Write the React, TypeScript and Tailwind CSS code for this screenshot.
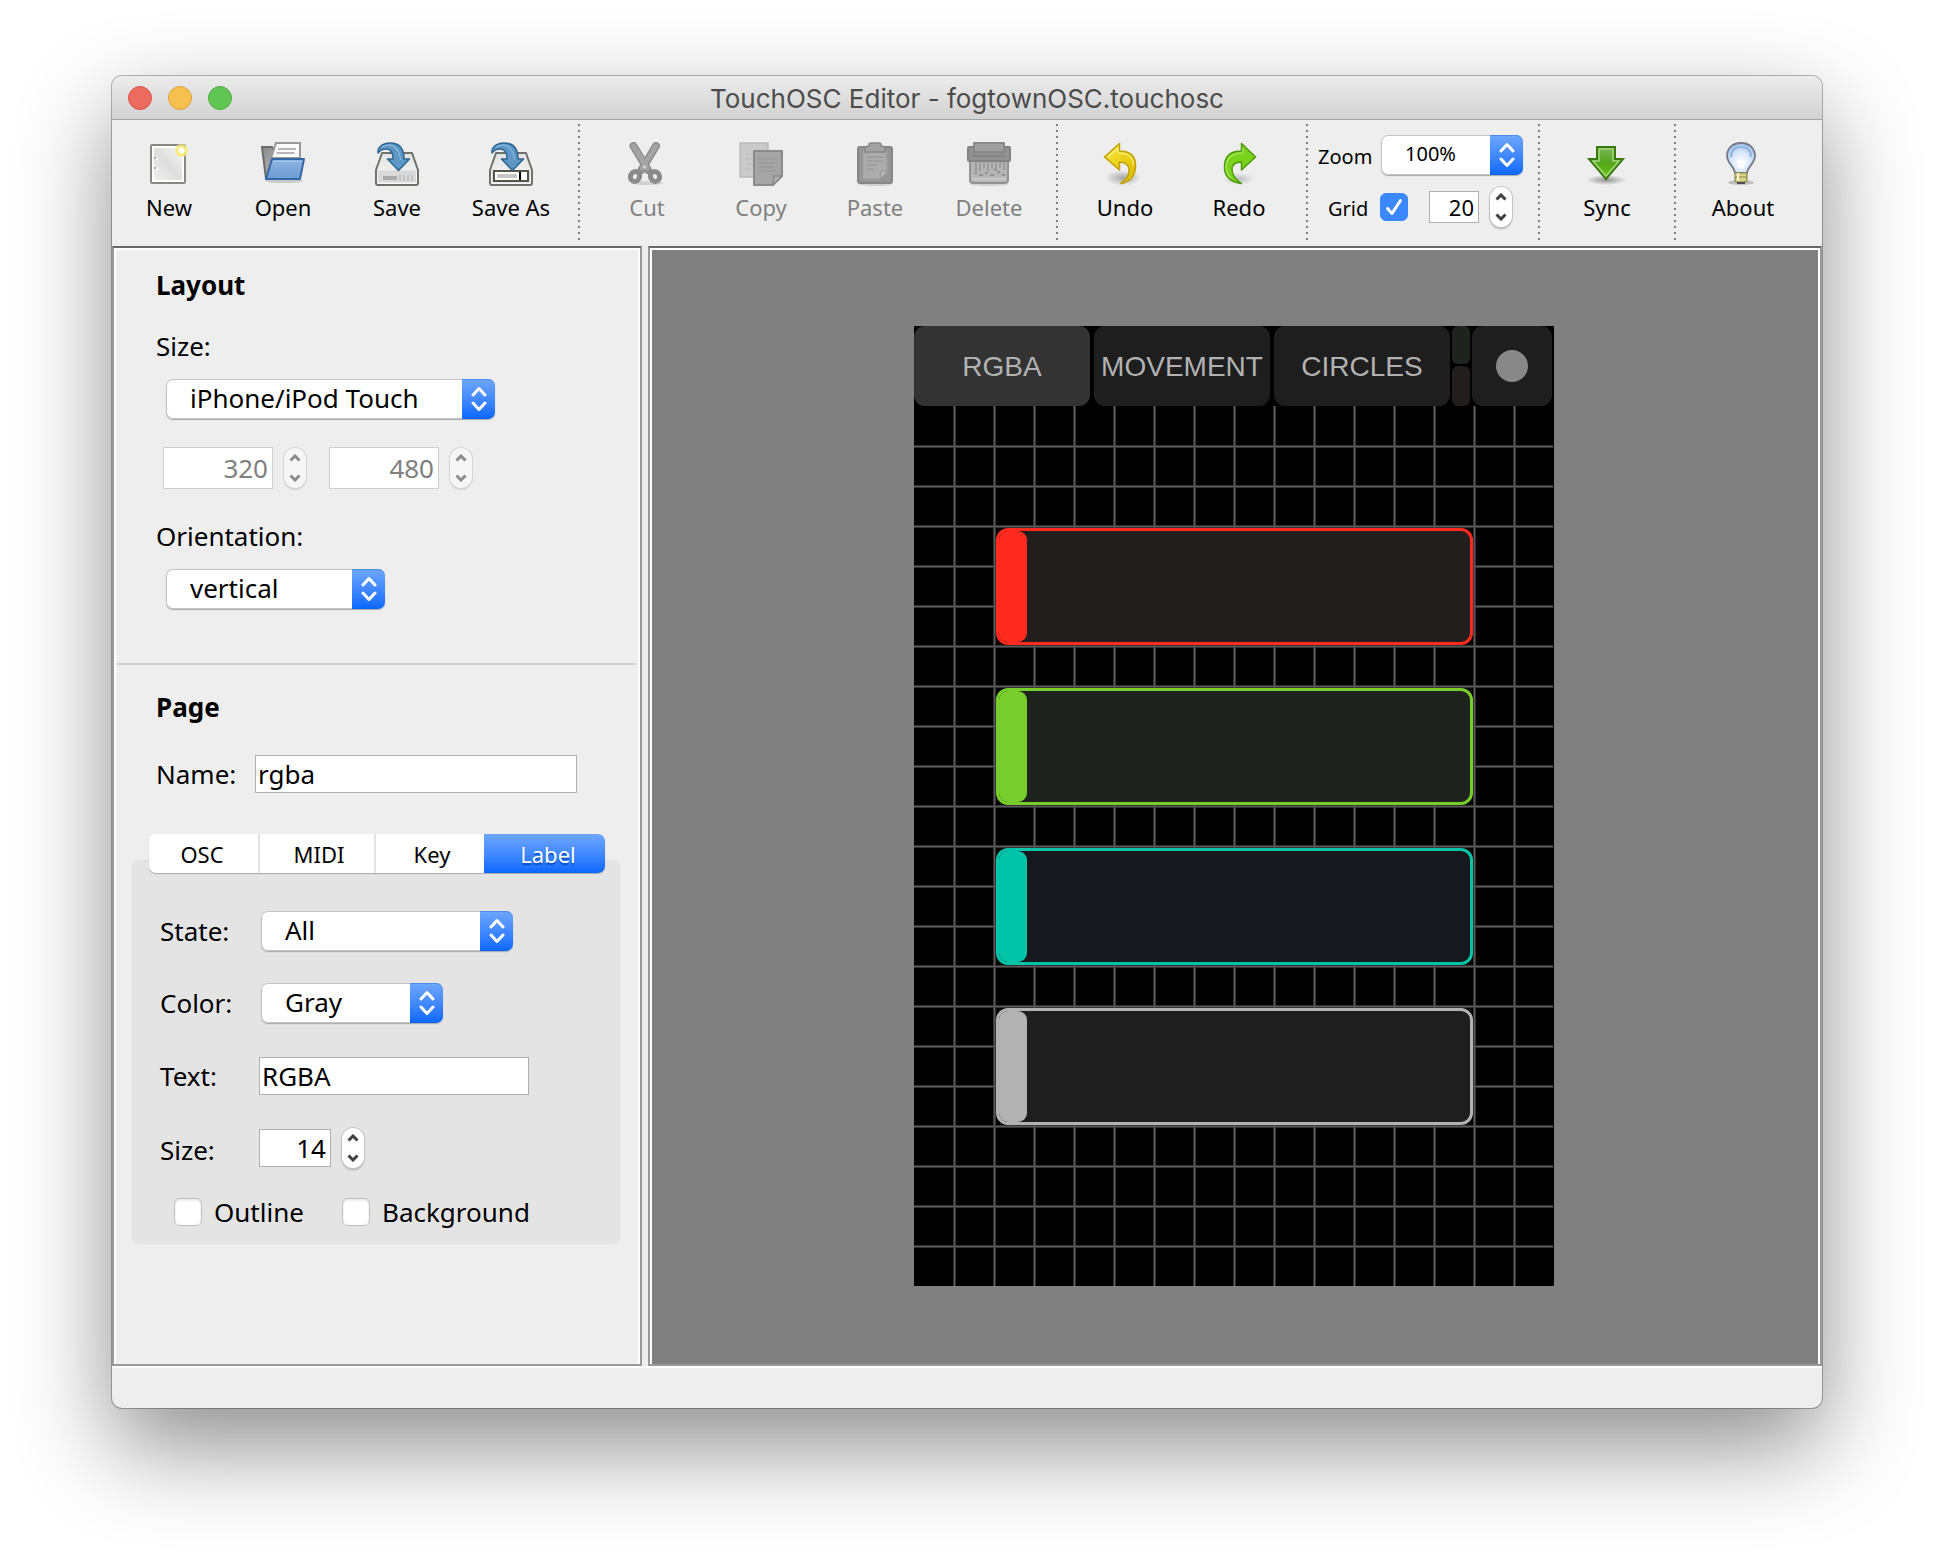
import React, { useState } from "react";
import type { ReactNode } from "react";

const sans = "font-['Noto_Sans',sans-serif]";

/* ---------- Toolbar icons ---------- */

function Icon({ children }: { children: ReactNode }) {
  return (
    <svg viewBox="0 0 44 44" className="size-11" aria-hidden="true" fill="none">
      {children}
    </svg>
  );
}

const NewIcon = () => (
  <Icon>
    <defs>
      <linearGradient id="new-paper" x1="0" y1="1" x2="1" y2="0">
        <stop offset="0" stopColor="#eeeeee" />
        <stop offset="0.5" stopColor="#dedede" />
        <stop offset="1" stopColor="#f4f4f4" />
      </linearGradient>
      <radialGradient id="new-glow">
        <stop offset="0.35" stopColor="#ffffff" />
        <stop offset="0.5" stopColor="#f7ea5a" />
        <stop offset="0.75" stopColor="#f6ec86" stopOpacity="0.8" />
        <stop offset="1" stopColor="#f8f3b0" stopOpacity="0" />
      </radialGradient>
    </defs>
    <rect x="4" y="3" width="34" height="38" rx="1" fill="#fff" stroke="#888884" strokeWidth="2" />
    <rect x="7" y="6" width="28" height="32" fill="url(#new-paper)" />
    <path d="M7 15h2v2h-2zM7 25h2v2h-2z" fill="#aaa" />
    <path d="M9 16h2v2h-2zM9 26h2v2h-2z" fill="#fff" />
    <circle cx="34.500" cy="8.500" r="7.500" fill="url(#new-glow)" />
  </Icon>
);

const OpenIcon = () => (
  <Icon>
    <defs>
      <linearGradient id="open-front" x1="0" y1="0" x2="0" y2="1">
        <stop offset="0" stopColor="#90b5e0" />
        <stop offset="1" stopColor="#6b9cd3" />
      </linearGradient>
      <linearGradient id="open-back" x1="0" y1="0" x2="1" y2="1">
        <stop offset="0" stopColor="#8b8b8b" />
        <stop offset="1" stopColor="#c6c6c6" />
      </linearGradient>
    </defs>
    <ellipse cx="23" cy="39" rx="19" ry="2" fill="#000" opacity="0.15" />
    <path d="M1 5h10l3 5h12v25L5 37z" fill="url(#open-back)" stroke="#6c6c6a" strokeWidth="2" />
    <path d="M15 1h24v15H10z" fill="#fafafa" stroke="#999" strokeWidth="2" />
    <path d="M17 7h18M15.500 11h18" stroke="#b6b6b6" strokeWidth="2" />
    <path d="M11 17h32l-4 20H5z" fill="url(#open-front)" stroke="#3566a5" strokeWidth="2" strokeLinejoin="round" />
    <path d="M13 19.500h27" stroke="#a9c7ea" strokeWidth="1" />
  </Icon>
);

function Drive({ children }: { children: ReactNode }) {
  return (
    <Icon>
      <defs>
        <linearGradient id="drive-top" x1="0" y1="0" x2="0" y2="1">
          <stop offset="0" stopColor="#e2e2e2" />
          <stop offset="1" stopColor="#fafafa" />
        </linearGradient>
      </defs>
      <path d="M7 11h30l6 17v13q0 2-2 2H3q-2 0-2-2V28z" fill="url(#drive-top)" stroke="#70706d" strokeWidth="2" strokeLinejoin="round" />
      <path d="M3 28.500h38v12H3z" fill="#d9d9d9" />
      {children}
      <path
        d="M3 11C2 5 8 1 15 1c9 0 14 5 14 16h5.500L23.500 28.500 12.500 17H18c0-7-3-10-7-10-4 0-5 1-8 4z"
        fill="#5d97c6"
        stroke="#2f6690"
        strokeWidth="1.500"
        strokeLinejoin="round"
      />
      <path d="M7 5c7-4 17-2 18.500 13" stroke="#8bb8dc" strokeWidth="1.200" />
    </Icon>
  );
}

const SaveIcon = () => (
  <Drive>
    <path d="M8 34h14v4H8z" fill="#aaa" />
    <path d="M25 33v6M29 33v6M33 33v6M37 33v6" stroke="#bdbdbd" strokeWidth="1.500" />
  </Drive>
);

const SaveAsIcon = () => (
  <Drive>
    <rect x="5" y="29" width="34" height="10" fill="#fff" stroke="#55554f" strokeWidth="2" />
    <path d="M8 32h20v4H8z" fill="#c6c6c6" />
    <path d="M30 30h2v8h-2z" fill="#000" />
  </Drive>
);

const CutIcon = () => (
  <Icon>
    <ellipse cx="22" cy="41" rx="16" ry="2" fill="#000" opacity="0.12" />
    <path d="M8.500 4 23 28M31 4 16.500 28" stroke="#8e8e8e" strokeWidth="8" strokeLinecap="round" />
    <path d="M8.500 4 22 26M31 4 17.500 26" stroke="#a4a4a4" strokeWidth="5" strokeLinecap="round" />
    <ellipse cx="10" cy="34.500" rx="4.500" ry="5" transform="rotate(28 10 34.500)" stroke="#8b8b8b" strokeWidth="5" />
    <ellipse cx="30" cy="34.500" rx="4.500" ry="5" transform="rotate(-28 30 34.500)" stroke="#8b8b8b" strokeWidth="5" />
    <circle cx="19.500" cy="25" r="1.500" fill="#d8d8d8" />
  </Icon>
);

const CopyIcon = () => (
  <Icon>
    <rect x="1" y="1" width="28" height="34" fill="#cacaca" stroke="#bababa" strokeWidth="1.500" />
    <path d="M6 12h8M6 17h8M6 22h8M6 27h6" stroke="#bababa" />
    <path d="M15 9h28v25l-9 9H15z" fill="#a5a5a5" stroke="#8b8b8b" strokeWidth="2" strokeLinejoin="round" />
    <path d="M43 34h-8l-1 9z" fill="#b2b2b2" stroke="#8b8b8b" strokeWidth="1.500" />
    <path d="M20 17h18M20 21h18M20 25h14M20 29h16" stroke="#939393" strokeWidth="1.200" />
  </Icon>
);

const PasteIcon = () => (
  <Icon>
    <ellipse cx="22" cy="42" rx="17" ry="2" fill="#000" opacity="0.12" />
    <rect x="5" y="5" width="34" height="36" rx="2" fill="#959595" stroke="#868686" strokeWidth="2" />
    <path d="M10 9h24v22l-6 6H10z" fill="#ababab" stroke="#9d9d9d" />
    <path d="M34 29h-6v8z" fill="#bdbdbd" stroke="#939393" />
    <path d="M14 15h16M14 19h16M14 23h10M14 27h6" stroke="#939393" strokeWidth="1.200" />
    <path d="M12 10V7q0-3 4-3V2q0-1 2-1h8q2 0 2 1v2q4 0 4 3v3z" fill="#a2a2a2" stroke="#868686" strokeWidth="1.500" />
  </Icon>
);

const DeleteIcon = () => (
  <Icon>
    <ellipse cx="22" cy="42.500" rx="19" ry="1.500" fill="#000" opacity="0.12" />
    <path d="M3 18h38v20q0 3-3 3H6q-3 0-3-3z" fill="#b5b5b5" stroke="#939393" strokeWidth="2" />
    <path d="M9 20v7M13 20v9M17 20v6M21 20v9M25 20v7M29 20v9M33 20v6M37 20v8" stroke="#9c9c9c" strokeWidth="2" />
    <path d="M7 31h3M12 33h4M18 31h3M23 33h4M30 30h3M35 33h3M8 28h2M27 28h2" stroke="#939393" strokeWidth="2" />
    <path d="M5 37h34" stroke="#c6c6c6" strokeWidth="3" />
    <rect x="1" y="5" width="42" height="14" rx="1" fill="#929292" stroke="#838383" strokeWidth="2" />
    <path d="M7 1h30v9H7z" fill="#a0a0a0" stroke="#898989" strokeWidth="2" strokeLinejoin="round" />
    <path d="M5 14h34" stroke="#848484" strokeWidth="2" />
  </Icon>
);

const UndoIcon = () => (
  <Icon>
    <defs>
      <radialGradient id="undo-shadow">
        <stop offset="0" stopColor="#000" stopOpacity="0.3" />
        <stop offset="1" stopColor="#000" stopOpacity="0" />
      </radialGradient>
      <linearGradient id="undo-body" x1="0" y1="0" x2="1" y2="1">
        <stop offset="0" stopColor="#f9e83e" />
        <stop offset="0.6" stopColor="#e8cb12" />
        <stop offset="1" stopColor="#d8b808" />
      </linearGradient>
    </defs>
    <ellipse cx="20" cy="36" rx="18" ry="8" fill="url(#undo-shadow)" />
    <path
      d="M16.500 1.500V9C27 9 33 14 32.500 25c-.5 9-6 15-15 16.500 6-4 9-9 8.500-14-.5-5-3.500-7.500-9.500-7.500v8L1.500 15z"
      fill="url(#undo-body)"
      stroke="#c1a006"
      strokeWidth="1.500"
      strokeLinejoin="round"
    />
    <path d="M5 15 15 6v5c9 0 15 4 15.500 12" stroke="#fdf48c" strokeWidth="1.200" />
  </Icon>
);

const RedoIcon = () => (
  <Icon>
    <defs>
      <radialGradient id="redo-shadow">
        <stop offset="0" stopColor="#000" stopOpacity="0.2" />
        <stop offset="1" stopColor="#000" stopOpacity="0" />
      </radialGradient>
    </defs>
    <ellipse cx="22" cy="37" rx="16" ry="6" fill="url(#redo-shadow)" />
    <path
      d="M24.500 1.500V9C14 9 7.500 14 7.500 25c0 9 6 15 17 16.500-6-4-9.500-8.500-9.500-14 0-5 3.500-7.500 9.500-7.500v8l14-13z"
      fill="#79d31c"
      stroke="#4c9a08"
      strokeWidth="1.500"
      strokeLinejoin="round"
    />
    <path d="M26 6v5c-11 0-16.500 4-17 14 0 4 2 8 5 11" stroke="#aeea68" strokeWidth="1.200" />
  </Icon>
);

const SyncIcon = () => (
  <Icon>
    <defs>
      <radialGradient id="sync-shadow">
        <stop offset="0" stopColor="#000" stopOpacity="0.4" />
        <stop offset="1" stopColor="#000" stopOpacity="0" />
      </radialGradient>
      <linearGradient id="sync-body" x1="0" y1="0" x2="0" y2="1">
        <stop offset="0" stopColor="#7cb55a" />
        <stop offset="0.5" stopColor="#55a51c" />
        <stop offset="1" stopColor="#6acb08" />
      </linearGradient>
    </defs>
    <ellipse cx="21" cy="38" rx="20" ry="5" fill="url(#sync-shadow)" />
    <path d="M12 5h18v12h8L21 37 4 17h8z" fill="url(#sync-body)" stroke="#39770c" strokeWidth="2" />
    <path d="M14 7h14v12h6L21 34 8 19h6z" stroke="#9fd87a" strokeWidth="1.500" />
  </Icon>
);

const AboutIcon = () => (
  <Icon>
    <defs>
      <radialGradient id="bulb" cx="0.500" cy="0.650" r="0.650">
        <stop offset="0" stopColor="#fdfeff" />
        <stop offset="0.5" stopColor="#dbe8f8" />
        <stop offset="1" stopColor="#a3c3ea" />
      </radialGradient>
    </defs>
    <ellipse cx="20" cy="40.500" rx="13" ry="2.500" fill="#000" opacity="0.2" />
    <path
      d="M20 1C11 1 6 7 6 14c0 7 7 10 8 17h12c1-7 8-10 8-17C34 7 29 1 20 1z"
      fill="url(#bulb)"
      stroke="#74798c"
      strokeWidth="1.800"
    />
    <path d="M10 15c0-7 4-10 10-10s10 3 10 10" stroke="#8db5e4" strokeWidth="2" />
    <path d="M16 20h8M17 24h6" stroke="#fff" strokeWidth="3" />
    <path d="M14 31h12v7q0 2-3 2h-6q-3 0-3-2z" fill="#d6d288" stroke="#8f8b4d" strokeWidth="1.200" />
    <path d="M14 35h12" stroke="#8f8b4d" strokeWidth="1.200" />
    <path d="M17 31v8" stroke="#f7f5d0" strokeWidth="2" />
    <path d="M16 40h8v2h-8z" fill="#4d4d4d" />
  </Icon>
);

/* ---------- Shared controls ---------- */

function ToolButton({ label, icon, disabled = false }: { label: string; icon: ReactNode; disabled?: boolean }) {
  return (
    <button
      type="button"
      disabled={disabled}
      className="flex w-[114px] shrink-0 flex-col items-center gap-[7px] pt-[22px] text-[22px] leading-7 text-black disabled:text-[#808080]"
    >
      {icon}
      <span>{label}</span>
    </button>
  );
}

function ToolSeparator() {
  return (
    <div className="flex w-[22px] shrink-0 justify-center pt-1 pb-[6px]" role="separator">
      <div className="w-[2px] bg-[repeating-linear-gradient(to_bottom,#808080_0_2px,transparent_2px_6px)]" />
    </div>
  );
}

function Select({
  id,
  options,
  width,
  size = "large",
}: {
  id: string;
  options: string[];
  width: string;
  size?: "small" | "large";
}) {
  const text = size === "small" ? "text-[20px]" : "text-[26px]";
  return (
    <div className={`relative h-10 shrink-0 ${width}`}>
      <select
        id={id}
        className={`size-full appearance-none rounded-[7px] bg-white pr-10 pb-[2px] pl-6 text-black shadow-[inset_0_0_0_1px_#c4c4c4,0_1px_1px_#a8a8a8] ${text}`}
      >
        {options.map((option) => (
          <option key={option}>{option}</option>
        ))}
      </select>
      <span className="pointer-events-none absolute inset-y-0 right-0 flex w-[33px] items-center justify-center rounded-r-[7px] bg-linear-to-b from-[#6ea7fb] to-[#0567fe] shadow-[inset_0_1px_0_#4b8ef0]">
        <svg viewBox="0 0 16 26" className="h-[26px] w-4" fill="none" stroke="#fff" strokeWidth="3" strokeLinecap="round" strokeLinejoin="round" aria-hidden="true">
          <path d="M2 9 8 2.500 14 9M2 17l6 6.500 6-6.500" />
        </svg>
      </span>
    </div>
  );
}

function Stepper({ name, disabled = false }: { name: string; disabled?: boolean }) {
  const body = disabled
    ? "bg-[#f6f6f6] text-[#8c8c8c] shadow-[0_0_0_1px_#d4d4d4,0_2px_1px_#cfcfcf]"
    : "bg-white text-[#3f3f3f] shadow-[0_0_0_1px_#c4c4c4,0_2px_2px_#a8a8a8]";
  return (
    <div className={`flex h-10 w-[22px] shrink-0 flex-col overflow-hidden rounded-[11px] ${body}`}>
      <button type="button" disabled={disabled} aria-label={`Increase ${name}`} className="flex flex-1 items-center justify-center">
        <svg viewBox="0 0 12 8" className="h-2 w-3" fill="none" stroke="currentColor" strokeWidth="3" aria-hidden="true">
          <path d="M1.500 6.500 6 2l4.500 4.500" />
        </svg>
      </button>
      <button type="button" disabled={disabled} aria-label={`Decrease ${name}`} className="flex flex-1 items-center justify-center">
        <svg viewBox="0 0 12 8" className="h-2 w-3" fill="none" stroke="currentColor" strokeWidth="3" aria-hidden="true">
          <path d="M1.500 1.500 6 6l4.500-4.500" />
        </svg>
      </button>
    </div>
  );
}

function Checkbox({ id, checked = false }: { id: string; checked?: boolean }) {
  return (
    <span className="relative size-7 shrink-0">
      <input
        id={id}
        type="checkbox"
        defaultChecked={checked}
        className="peer block size-7 appearance-none rounded-[6px] border border-[#bfbfbf] bg-white shadow-[inset_0_2px_2px_#ededed] checked:border-[#3b88fd] checked:bg-[#3b88fd] checked:shadow-none"
      />
      <svg
        viewBox="0 0 28 28"
        className="pointer-events-none absolute inset-0 hidden size-7 peer-checked:block"
        fill="none"
        stroke="#fff"
        strokeWidth="3"
        strokeLinecap="round"
        strokeLinejoin="round"
        aria-hidden="true"
      >
        <path d="M7.500 15.500 12 20.500 20.500 7.500" />
      </svg>
    </span>
  );
}

function TextBox({
  id,
  value,
  box,
  align = "text-left",
  disabled = false,
  label,
}: {
  id: string;
  value: string;
  box: string;
  align?: string;
  disabled?: boolean;
  label?: string;
}) {
  return (
    <input
      id={id}
      type="text"
      defaultValue={value}
      disabled={disabled}
      aria-label={label}
      className={`shrink-0 border border-[#b0b0b0] bg-white text-black disabled:border-[#d0d0d0] disabled:text-[#808080] ${align} ${box}`}
    />
  );
}

/* ---------- Window sections ---------- */

function TitleBar() {
  return (
    <header className="relative flex h-11 shrink-0 items-center justify-center border-b border-[#a5a5a5] bg-linear-to-b from-[#ececec] to-[#d2d2d2]">
      <div className="absolute inset-y-0 left-4 flex items-center gap-4">
        <button type="button" aria-label="Close" className="size-6 rounded-full border border-[#d9534a] bg-[#ed6a5f]" />
        <button type="button" aria-label="Minimize" className="size-6 rounded-full border border-[#dba23c] bg-[#f6c050]" />
        <button type="button" aria-label="Zoom window" className="size-6 rounded-full border border-[#4fae3e] bg-[#62c655]" />
      </div>
      <h1 className="pt-[2px] font-['Inter',sans-serif] text-[26px] leading-8 text-[#4c4c4c]">
        TouchOSC Editor - fogtownOSC.touchosc
      </h1>
    </header>
  );
}

function Toolbar() {
  return (
    <div role="toolbar" aria-label="Main" className="flex h-[126px] shrink-0 bg-[#eeeeee]">
      <ToolButton label="New" icon={<NewIcon />} />
      <ToolButton label="Open" icon={<OpenIcon />} />
      <ToolButton label="Save" icon={<SaveIcon />} />
      <ToolButton label="Save As" icon={<SaveAsIcon />} />
      <ToolSeparator />
      <ToolButton label="Cut" icon={<CutIcon />} disabled />
      <ToolButton label="Copy" icon={<CopyIcon />} disabled />
      <ToolButton label="Paste" icon={<PasteIcon />} disabled />
      <ToolButton label="Delete" icon={<DeleteIcon />} disabled />
      <ToolSeparator />
      <ToolButton label="Undo" icon={<UndoIcon />} />
      <ToolButton label="Redo" icon={<RedoIcon />} />
      <ToolSeparator />
      <div className="flex w-[210px] shrink-0 flex-col gap-3 pt-[15px] text-[20px]">
        <div className="flex h-10 items-center">
          <label htmlFor="zoom" className="w-[63px] pt-1">
            Zoom
          </label>
          <Select id="zoom" options={["100%", "200%", "400%"]} width="w-[142px]" size="small" />
        </div>
        <div className="flex h-10 items-center">
          <label htmlFor="grid" className="w-[62px] pt-1 pl-[10px]">
            Grid
          </label>
          <Checkbox id="grid" checked />
          <span className="w-[21px]" />
          <TextBox id="grid-size" label="Grid size" value="20" box="h-8 w-[50px] px-1 text-[22px]" align="text-right" />
          <span className="w-[11px]" />
          <Stepper name="grid size" />
        </div>
      </div>
      <ToolSeparator />
      <ToolButton label="Sync" icon={<SyncIcon />} />
      <ToolSeparator />
      <ToolButton label="About" icon={<AboutIcon />} />
    </div>
  );
}

const inspectorTabs = [
  { name: "OSC", width: "w-[111px] pr-[3px]" },
  { name: "MIDI", width: "w-[116px] pl-1" },
  { name: "Key", width: "w-[108px] pl-1" },
  { name: "Label", width: "w-[121px] pl-[7px]" },
];

function InspectorTabs() {
  const [active, setActive] = useState("Label");
  return (
    <div role="tablist" className="relative z-10 mx-[17px] flex h-[39px] w-fit overflow-hidden rounded-[7px] bg-white text-[22px] leading-[38px] shadow-[0_1px_1px_#a8a8a8]">
      {inspectorTabs.map((tab, index) => (
        <button
          key={tab.name}
          type="button"
          role="tab"
          aria-selected={active === tab.name}
          onClick={() => setActive(tab.name)}
          className={`h-full border-[#e3e3e3] aria-selected:border-transparent aria-selected:bg-linear-to-b aria-selected:from-[#6ea7fb] aria-selected:to-[#0567fe] aria-selected:text-white aria-selected:[text-shadow:0_2px_1px_#0a4fc0] ${tab.width} ${index < 2 ? "border-r-2" : ""}`}
        >
          {tab.name}
        </button>
      ))}
    </div>
  );
}

function Inspector() {
  return (
    <aside className="flex w-[530px] shrink-0 flex-col border-2 border-[#999999] border-t-[#666666] text-[26px] leading-8">
      <div className="flex flex-1 flex-col border-2 border-b-0 border-white bg-[#eeeeee]">
        <section className="px-10 pt-[19px]">
          <h2 className="font-bold">Layout</h2>
          <label htmlFor="layout-size" className="mt-[29px] block">
            Size:
          </label>
          <div className="mt-[17px] ml-[10px]">
            <Select id="layout-size" options={["iPhone/iPod Touch", "iPad", "Custom"]} width="w-[329px]" />
          </div>
          <div className="mt-7 ml-[7px] flex h-[42px] items-center gap-[11px]">
            <TextBox id="layout-width" label="Width" value="320" box="h-[42px] w-[110px] px-1" align="text-right" disabled />
            <Stepper name="width" disabled />
            <span className="w-px" />
            <TextBox id="layout-height" label="Height" value="480" box="h-[42px] w-[110px] px-1" align="text-right" disabled />
            <Stepper name="height" disabled />
          </div>
          <label htmlFor="orientation" className="mt-[31px] block">
            Orientation:
          </label>
          <div className="mt-[17px] ml-[10px]">
            <Select id="orientation" options={["vertical", "horizontal"]} width="w-[219px]" />
          </div>
        </section>

        <hr className="mt-[54px] mr-[3px] ml-px border-t-2 border-[#d1d1d1]" />

        <section className="pt-[26px] pr-[18px] pl-4">
          <h2 className="px-6 font-bold">Page</h2>
          <div className="mt-8 flex items-center px-6">
            <label htmlFor="page-name" className="w-[99px]">
              Name:
            </label>
            <TextBox id="page-name" value="rgba" box="h-[38px] w-[322px] px-[2px]" />
          </div>

          <div className="mt-[41px]">
            <InspectorTabs />
            <div role="tabpanel" aria-label="Label" className="mt-[-13px] rounded-[8px] border border-[#dedede] bg-[#e4e4e4] pt-[50px] pr-5 pb-[15px] pl-[27px]">
              <div className="flex items-center">
                <label htmlFor="label-state" className="w-[101px]">
                  State:
                </label>
                <Select id="label-state" options={["All", "Pressed", "Released"]} width="w-[252px]" />
              </div>
              <div className="mt-8 flex items-center">
                <label htmlFor="label-color" className="w-[101px]">
                  Color:
                </label>
                <Select id="label-color" options={["Gray", "Red", "Green", "Blue"]} width="w-[182px]" />
              </div>
              <div className="mt-[34px] flex items-center">
                <label htmlFor="label-text" className="w-[99px]">
                  Text:
                </label>
                <TextBox id="label-text" value="RGBA" box="h-[38px] w-[270px] px-[2px]" />
              </div>
              <div className="mt-8 flex h-[42px] items-center">
                <label htmlFor="label-size" className="w-[99px] pt-1">
                  Size:
                </label>
                <TextBox id="label-size" value="14" box="h-[38px] w-[72px] px-1" align="text-right" />
                <span className="w-[11px]" />
                <Stepper name="text size" />
              </div>
              <div className="mt-[27px] flex h-8 items-center pl-[14px]">
                <Checkbox id="outline" />
                <label htmlFor="outline" className="w-[140px] pl-3">
                  Outline
                </label>
                <Checkbox id="background" />
                <label htmlFor="background" className="pl-3">
                  Background
                </label>
              </div>
            </div>
          </div>
        </section>
      </div>
    </aside>
  );
}

const faders = [
  { name: "Red", style: "border-[#ff2a1f] bg-[#231e1e] [&::-webkit-slider-thumb]:bg-[#ff2a1f]" },
  { name: "Green", style: "border-[#78cc2b] bg-[#1e231e] [&::-webkit-slider-thumb]:bg-[#78cc2b]" },
  { name: "Blue", style: "border-[#00c4a8] bg-[#16181d] [&::-webkit-slider-thumb]:bg-[#00c4a8]" },
  { name: "Alpha", style: "border-[#b2b2b2] bg-[#1e1e1e] [&::-webkit-slider-thumb]:bg-[#b2b2b2]" },
];

const columns = Array.from({ length: 15 }, (_, i) => (i + 1) * 40 + 0.5);
const rows = Array.from({ length: 21 }, (_, i) => (i + 1) * 40 + 0.5);

function GridLines() {
  const path =
    columns.map((x) => `M${x} 0V880`).join("") + rows.map((y) => `M0 ${y}H639`).join("");
  return (
    <svg viewBox="0 0 640 880" className="absolute inset-0 size-full" fill="none" aria-hidden="true">
      <path d={path} stroke="#333333" strokeWidth="3" />
      <path d={path} stroke="#5a5a5a" strokeWidth="1" />
    </svg>
  );
}

function Device() {
  const tab = "h-20 w-44 rounded-[11px]";
  return (
    <div className="w-[640px] bg-black">
      <div className="flex h-20 font-['Liberation_Sans',sans-serif] text-[28px] leading-8 text-[#b2b2b2]">
        <div className="flex gap-1">
          <button type="button" className={`${tab} bg-[#333333] pt-[2px]`}>
            RGBA
          </button>
          <button type="button" className={`${tab} bg-[#1e1e1e] pt-[2px]`}>
            MOVEMENT
          </button>
          <button type="button" className={`${tab} bg-[#1e1e1e] pt-[2px]`}>
            CIRCLES
          </button>
        </div>
        <div className="ml-[2px] flex w-[18px] flex-col gap-[2px]">
          <div className="h-[38px] rounded-[6px] bg-[#1e231e]" />
          <div className="h-10 rounded-[6px] bg-[#231e1e]" />
        </div>
        <div className="ml-[2px] flex h-20 w-20 items-center justify-center rounded-[11px] bg-[#1e1e1e]">
          <div className="size-8 rounded-full bg-[#888888]" />
        </div>
      </div>
      <div className="relative h-[880px]">
        <GridLines />
        <div className="relative flex flex-col gap-[43px] pt-[122px] pl-[82px]">
          {faders.map((fader) => (
            <input
              key={fader.name}
              type="range"
              min="0"
              max="100"
              defaultValue="0"
              aria-label={fader.name}
              className={`block h-[117px] w-[477px] appearance-none rounded-[12px] border-[3px] [&::-webkit-slider-thumb]:h-[111px] [&::-webkit-slider-thumb]:w-7 [&::-webkit-slider-thumb]:appearance-none [&::-webkit-slider-thumb]:rounded-[9px] ${fader.style}`}
            />
          ))}
        </div>
      </div>
    </div>
  );
}

export default function App() {
  return (
    <div className={`flex min-h-screen flex-col bg-white px-28 pt-[76px] pb-[148px] text-black ${sans}`}>
      <div className="flex flex-1 flex-col overflow-hidden rounded-[10px] bg-[#eeeeee] shadow-[0_0_0_1px_rgba(0,0,0,0.28),0_38px_95px_rgba(0,0,0,0.45)]">
        <TitleBar />
        <Toolbar />
        <div className="flex flex-1 gap-[6px] border-b-2 border-white">
          <Inspector />
          <main className="flex flex-1 flex-col border-2 border-[#999999] border-t-[#666666]">
            <div className="flex flex-1 items-center justify-center border-2 border-b-0 border-white bg-[#808080] pr-[2px] pb-[2px]">
              <Device />
            </div>
          </main>
        </div>
        <footer className="h-10 shrink-0" />
      </div>
    </div>
  );
}
